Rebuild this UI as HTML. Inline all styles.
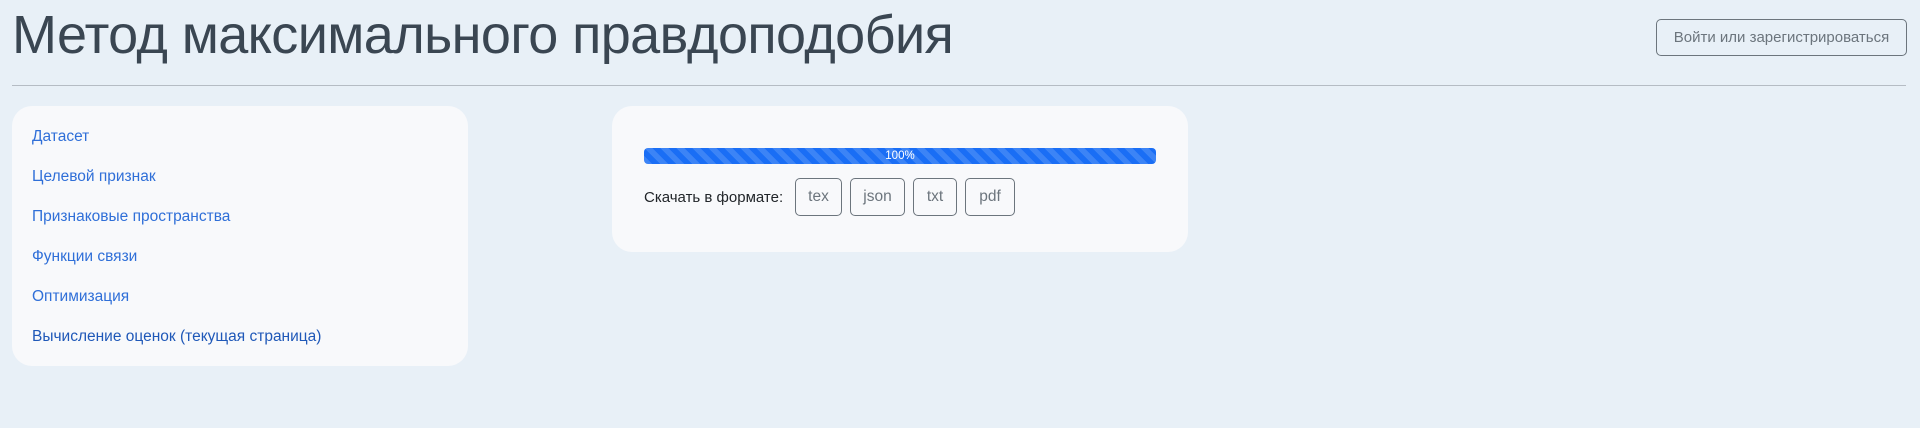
<!DOCTYPE html>
<html><head><meta charset="utf-8">
<style>
*{box-sizing:border-box;margin:0;padding:0}
body{width:1920px;height:428px;background:#e8f0f7;font-family:"Liberation Sans","Noto Sans CJK SC",sans-serif;position:relative;overflow:hidden;color:#212529}
h1{position:absolute;left:12px;top:0px;font-size:54px;font-weight:300;color:#3a4652;letter-spacing:-0.6px;white-space:nowrap;line-height:70px}
.login{position:absolute;left:1656px;top:19px;width:251px;height:37px;border:1px solid #6c757d;border-radius:5px;color:#6c757d;font-size:15px;display:flex;align-items:center;justify-content:center}
hr{position:absolute;left:12px;top:85px;width:1894px;border:0;border-top:1px solid #b5bcc4}
.card{position:absolute;background:#f8f9fb;border-radius:20px}
.l{left:12px;top:106px;width:456px;height:260px}
.l a{position:absolute;left:20px;font-size:15.5px;color:#2f6fd8;text-decoration:none;white-space:nowrap;line-height:20px}
.r{left:612px;top:106px;width:576px;height:146px}
.bar{position:absolute;left:32px;top:42px;width:512px;height:16px;border-radius:4px;background-color:#1a6ef5;background-image:linear-gradient(45deg,rgba(255,255,255,.15) 25%,transparent 25%,transparent 50%,rgba(255,255,255,.15) 50%,rgba(255,255,255,.15) 75%,transparent 75%,transparent);background-size:16px 16px;color:#fff;font-size:11.5px;text-align:center;line-height:16px}
.lab{position:absolute;left:32px;top:82px;font-size:15px;line-height:20px}
.b{position:absolute;top:72px;height:38px;border:1px solid #6c757d;border-radius:5px;color:#6c757d;font-size:15.5px;display:flex;align-items:center;justify-content:center}
</style></head><body>
<h1>Метод максимального правдоподобия</h1>
<div class="login">Войти или зарегистрироваться</div>
<hr>
<div class="card l">
<a style="top:21px">Датасет</a>
<a style="top:61px">Целевой признак</a>
<a style="top:101px">Признаковые пространства</a>
<a style="top:141px">Функции связи</a>
<a style="top:181px">Оптимизация</a>
<a style="top:221px;color:#1f58b8">Вычисление оценок (текущая страница)</a>
</div>
<div class="card r">
<div class="bar">100%</div>
<div class="lab">Скачать в формате:</div>
<div class="b" style="left:183px;width:47px">tex</div>
<div class="b" style="left:238px;width:55px">json</div>
<div class="b" style="left:301px;width:44px">txt</div>
<div class="b" style="left:353px;width:50px">pdf</div>
</div>
</body></html>
